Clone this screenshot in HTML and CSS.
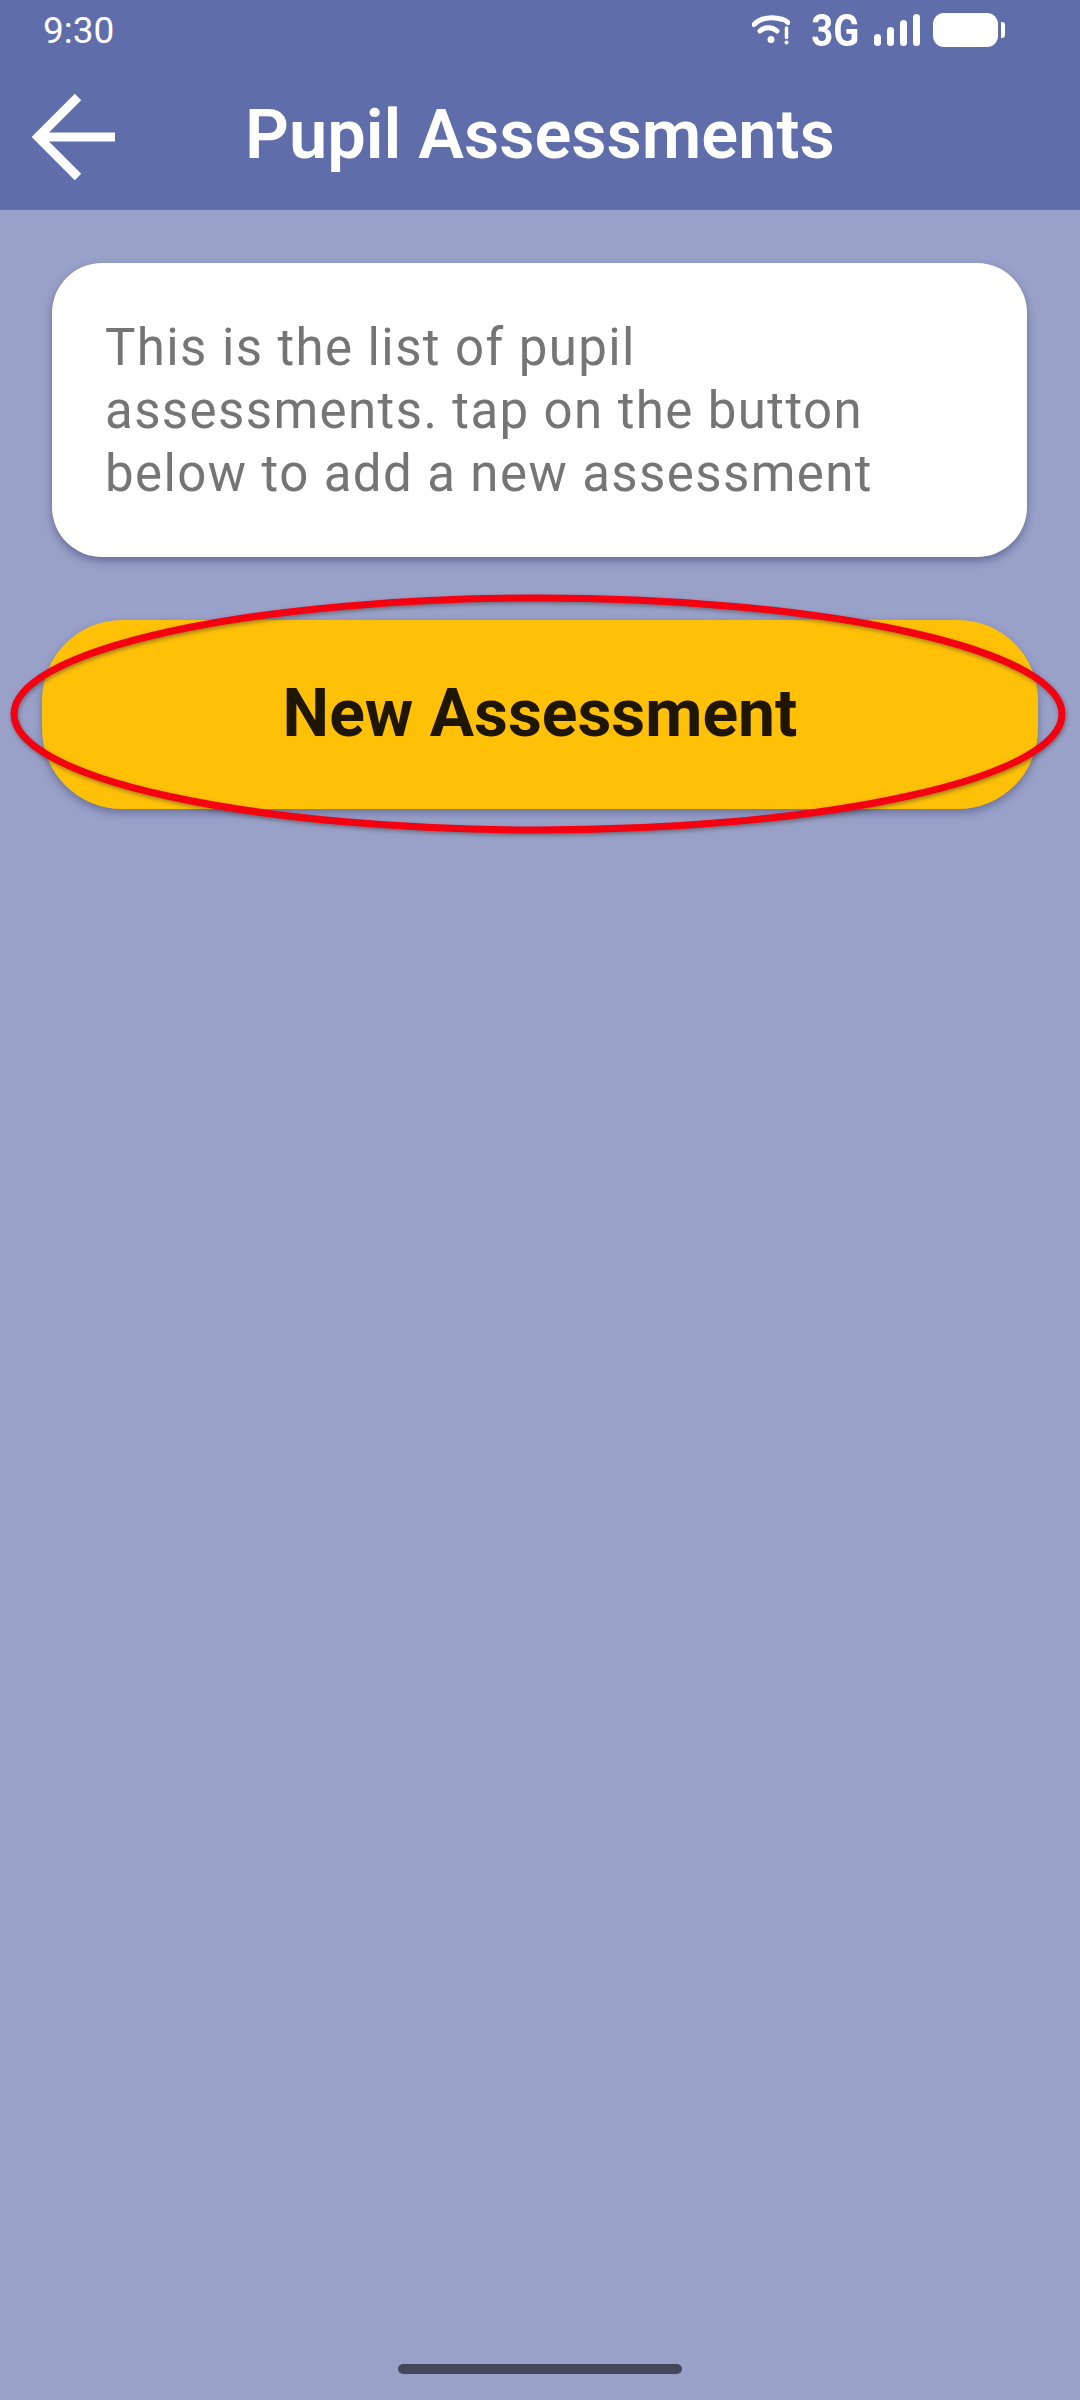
FILE: index.html
```html
<!DOCTYPE html>
<html lang="en">

<head>
    <meta charset="UTF-8" />
    <meta name="viewport" content="width=device-width, initial-scale=1.0" />
    <title>Pupil Assessments</title>
    <link rel="stylesheet" href="styles.css">
</head>

<body>
    <header class="app-header">
        <div class="status-bar">
            <span class="status-time">9:30</span>
            <div class="status-icons">
                <svg class="icon-wifi" width="38" height="30" viewBox="0 0 38 30" aria-hidden="true">
                    <path d="M2 9.500C10 2 21 1.500 31 4.500Q34 5.500 36 7.500" fill="none" stroke="#fff" stroke-width="5" stroke-linecap="round" />
                    <path d="M8 16C13 11.500 20 11.500 25 16" fill="none" stroke="#fff" stroke-width="5" stroke-linecap="round" />
                    <circle cx="19" cy="24.500" r="3.500" fill="#fff" />
                    <path d="M34.500 13V22.500" stroke="#fff" stroke-width="3.500" stroke-linecap="round" />
                    <circle cx="34.500" cy="27.500" r="2" fill="#fff" />
                </svg>
                <span class="status-network">3G</span>
                <svg class="icon-signal" width="46" height="32" viewBox="0 0 46 32" aria-hidden="true">
                    <rect x="0" y="20" width="7" height="12" rx="3.500" fill="#fff" />
                    <rect x="13" y="13" width="7" height="19" rx="3.500" fill="#fff" />
                    <rect x="26" y="6" width="7" height="26" rx="3.500" fill="#fff" />
                    <rect x="39" y="0" width="7" height="32" rx="3.500" fill="#fff" />
                </svg>
                <div class="battery">
                    <span class="battery-body"></span>
                    <span class="battery-cap"></span>
                </div>
            </div>
        </div>
        <div class="toolbar">
            <svg class="icon-back" width="88" height="92" viewBox="0 0 88 92" aria-hidden="true">
                <path d="M87 46H10M50 6L10 46L50 86" fill="none" stroke="#fff" stroke-width="9" />
            </svg>
            <h1 class="toolbar-title">Pupil Assessments</h1>
        </div>
    </header>

    <main class="content">
        <section class="info-card">
            <p class="info-text">This is the list of pupil<br>assessments. tap on the button<br>below to add a new assessment</p>
        </section>

        <div class="action-wrap">
            <button class="action-btn">New Assessment</button>
            <!-- red circle drawn over the button -->
            <svg class="highlight" width="1080" height="270" viewBox="0 0 1080 270" aria-hidden="true">
                <ellipse cx="538" cy="125" rx="524" ry="116" fill="none" stroke="#f50010" stroke-width="7" />
            </svg>
        </div>
    </main>

    <div class="home-bar"></div>
</body>

</html>
```

FILE: styles.css
```css
* {
    box-sizing: border-box;
}

html,
body {
    margin: 0;
    height: 100%;
}

body {
    display: flex;
    flex-direction: column;
    width: 1080px;
    height: 2400px;
    overflow: hidden;
    background-color: #99a1c9;
    font-family: "Roboto", "Liberation Sans", sans-serif;
}

.app-header {
    height: 210px;
    background-color: #606dab;
    color: #fff;
}

.status-bar {
    display: flex;
    align-items: center;
    justify-content: space-between;
    height: 60px;
    padding: 0 75px 0 43px;
}

.status-time {
    font-size: 37px;
    font-weight: 400;
}

.status-icons {
    display: flex;
    align-items: center;
}

.icon-wifi {
    margin-right: 3px;
}

.status-network {
    margin: 0 11px 0 14px;
    font-size: 45px;
    font-weight: 700;
    transform: scaleX(0.85);
}

.battery {
    display: flex;
    align-items: center;
    gap: 3px;
    margin-left: 13px;
}

.battery-body {
    width: 65px;
    height: 34px;
    border-radius: 11px;
    background-color: #fff;
}

.battery-cap {
    width: 4px;
    height: 16px;
    border-radius: 0 3px 3px 0;
    background-color: #fff;
}

.toolbar {
    display: flex;
    align-items: center;
    height: 150px;
    padding-left: 28px;
}

.icon-back {
    flex-shrink: 0;
    margin-top: 4px;
    filter: blur(0.6px);
}

.toolbar-title {
    margin: 0 0 0 129px;
    font-size: 68.500px;
    font-weight: 600;
    line-height: 1;
}

.content {
    flex: 1;
    padding: 53px 0 0;
}

.info-card {
    width: 975px;
    height: 294px;
    margin-left: 52px;
    padding: 53px 53px 0;
    border-radius: 50px;
    background-color: #fff;
    box-shadow: 0 4px 8px rgba(40, 45, 90, 0.45);
}

.info-text {
    margin: 0;
    color: #757575;
    font-size: 51px;
    line-height: 63px;
    letter-spacing: 1.400px;
}

.action-wrap {
    position: relative;
    margin-top: 63px;
    padding-left: 42px;
}

.action-btn {
    display: block;
    width: 996px;
    height: 189px;
    padding-bottom: 3px;
    border: none;
    border-radius: 80px;
    background-color: #ffc107;
    color: #1e1600;
    font-family: inherit;
    font-size: 66px;
    font-weight: 700;
    box-shadow: 0 4px 8px rgba(40, 45, 90, 0.4);
}

.highlight {
    position: absolute;
    top: -31px;
    left: 0;
    filter: drop-shadow(1px 2px 2px rgba(60, 50, 40, 0.5));
}

.home-bar {
    align-self: center;
    width: 284px;
    height: 10px;
    margin-bottom: 26px;
    border-radius: 5px;
    background-color: #44465a;
}
```
